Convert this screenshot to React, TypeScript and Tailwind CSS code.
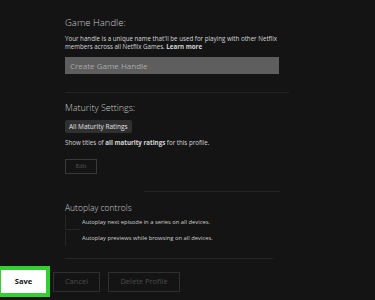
import React from "react";

const font = { fontFamily: '"Open Sans", "Liberation Sans", sans-serif' };

export default function App() {
  return (
    <div
      className="w-[375px] h-[300px] overflow-hidden bg-[#141414] text-[#cfcfcf] flex flex-col"
      style={font}
    >
      <div className="pl-[65px] pt-[17px] flex flex-col">
        {/* Game handle */}
        <h2 className="text-[9.5px] font-light text-[#c8c8c8] leading-[12px]">Game Handle:</h2>
        <p className="mt-[6px] w-[224px] text-[6.2px] leading-[8px] text-[#d6d6d6]">
          Your handle is a unique name that'll be used for playing with other Netflix
          members across all Netflix Games. <span className="font-bold">Learn more</span>
        </p>
        <div className="mt-[6px] w-[214px] h-[17px] bg-[#5e5e5e] flex items-center px-[5px] text-[8px] text-[#a9a9a9]">
          Create Game Handle
        </div>
        <div className="mt-[18px] w-[224px] h-px bg-[#242424]" />

        {/* Maturity */}
        <h2 className="mt-[9px] text-[9px] font-light text-[#c8c8c8] leading-[12px]">Maturity Settings:</h2>
        <div className="mt-[6px] self-start h-[13px] px-[4px] rounded-[2px] bg-[#303030] flex items-center text-[6.5px] text-[#e0e0e0]">
          All Maturity Ratings
        </div>
        <p className="mt-[6px] text-[6.2px] leading-[8px] text-[#d6d6d6]">
          Show titles of <span className="font-bold">all maturity ratings</span> for this profile.
        </p>
        <div className="mt-[12px] w-[32px] h-[15px] border border-[#3a3a3a] flex items-center justify-center text-[6px] text-[#555]">
          Edit
        </div>
        <div className="mt-[17px] ml-[79px] w-[136px] h-px bg-[#242424]" />

        {/* Autoplay */}
        <h2 className="mt-[10px] text-[8.5px] font-light text-[#c8c8c8] leading-[12px]">Autoplay controls</h2>
        <div className="flex flex-col">
          <div className="flex items-center h-[16px]">
            <div className="w-[15px] h-[15px] border-l border-b border-[#262626]" />
            <span className="ml-[2px] text-[5.8px] text-[#d0d0d0]">Autoplay next episode in a series on all devices.</span>
          </div>
          <div className="flex items-center h-[16px]">
            <div className="w-[15px] h-[15px] border-l border-[#262626]" />
            <span className="ml-[2px] text-[5.8px] text-[#d0d0d0]">Autoplay previews while browsing on all devices.</span>
          </div>
        </div>
        <div className="mt-[12px] w-[208px] h-px bg-[#262626]" />
      </div>

      {/* Buttons */}
      <div className="mt-[7px] flex items-center">
        <div className="w-[50px] h-[31px] border-[4px] border-l-[1px] border-[#33d12f] bg-white flex items-center justify-center text-[7.5px] font-bold text-[#111]">
          Save
        </div>
        <div className="ml-[3px] w-[47px] h-[20px] border border-[#2f2f2f] flex items-center justify-center text-[7.5px] text-[#4a4a4a]">
          Cancel
        </div>
        <div className="ml-[8px] w-[72px] h-[20px] border border-[#2f2f2f] flex items-center justify-center text-[7.5px] text-[#4a4a4a]">
          Delete Profile
        </div>
      </div>
    </div>
  );
}
